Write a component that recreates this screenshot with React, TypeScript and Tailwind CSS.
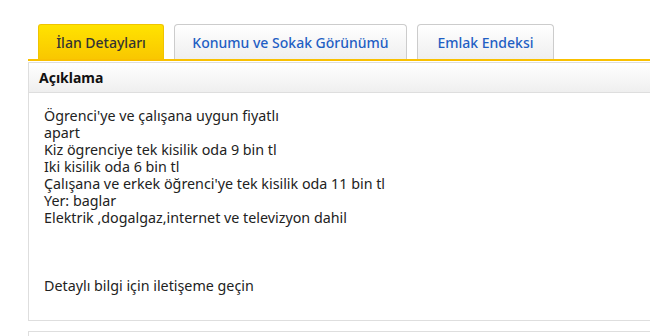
import React from "react";

const tabs = [
  { label: "İlan Detayları", width: "w-[126px]", active: true },
  { label: "Konumu ve Sokak Görünümü", width: "w-[233px]", active: false },
  { label: "Emlak Endeksi", width: "w-[137px]", active: false },
];

const lines = [
  "Ögrenci'ye ve çalışana uygun fiyatlı",
  "apart",
  "Kiz ögrenciye tek kisilik oda 9 bin tl",
  "Iki kisilik oda 6 bin tl",
  "Çalışana ve erkek öğrenci'ye tek kisilik oda 11 bin tl",
  "Yer: baglar",
  "Elektrik ,dogalgaz,internet ve televizyon dahil",
  "",
  "",
  "",
  "Detaylı bilgi için iletişeme geçin",
];

export default function App() {
  return (
    <div
      className="w-[650px] h-[336px] overflow-hidden bg-white pt-[24px]"
      style={{ fontFamily: "'Noto Sans', Roboto, sans-serif" }}
    >
      <div className="pl-[28px]">
        {/* tabs */}
        <div className="flex items-end gap-[10px] pl-[10px]">
          {tabs.map((t) =>
            t.active ? (
              <div
                key={t.label}
                className={`${t.width} h-[35px] rounded-t-[3px] border border-b-0 border-[#f0c400] bg-gradient-to-b from-[#ffe300] to-[#f9c700] flex items-center justify-center text-[14px] text-[#333] font-medium`}
              >
                {t.label}
              </div>
            ) : (
              <div
                key={t.label}
                className={`${t.width} h-[35px] rounded-t-[4px] border border-b-0 border-[#cccccc] bg-gradient-to-b from-white to-[#efefef] flex items-center justify-center text-[14px] text-[#1f5fc4] font-medium`}
              >
                {t.label}
              </div>
            )
          )}
        </div>
        <div className="h-[2px] bg-[#f9c000] -mr-4" />

        {/* description box */}
        <div className="mt-[1px] -mr-4 border border-[#dedede]">
          <div className="h-[30px] border-b border-[#dedede] bg-gradient-to-b from-white to-[#efefef] flex items-center pl-[10px] text-[14px] font-bold text-[#111]">
            Açıklama
          </div>
          <div className="pl-[15px] pt-[14px] pb-[26px] text-[14.3px] leading-[17px] text-[#222]">
            {lines.map((l, i) => (
              <div key={i} className="h-[17px] leading-[17px]">
                {l}
              </div>
            ))}
          </div>
        </div>

        <div className="mt-[10px] -mr-4 h-[20px] border border-[#dedede]" />
      </div>
    </div>
  );
}
